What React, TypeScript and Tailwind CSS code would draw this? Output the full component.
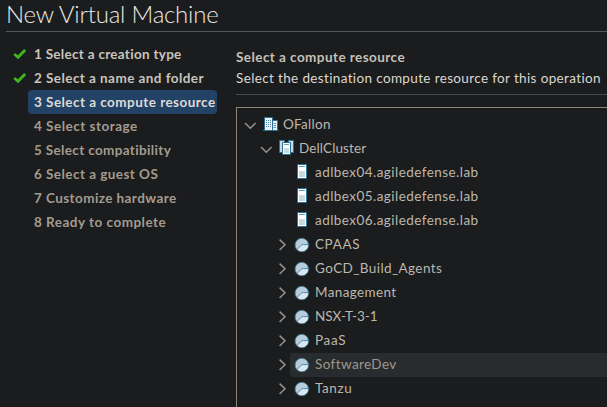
import React from "react";

type Step = { label: string; state: "done" | "current" | "todo"; tracking: string };

const steps: Step[] = [
  { label: "1 Select a creation type", state: "done", tracking: "tracking-[0.29px]" },
  { label: "2 Select a name and folder", state: "done", tracking: "tracking-[0.44px]" },
  { label: "3 Select a compute resource", state: "current", tracking: "tracking-[0.46px]" },
  { label: "4 Select storage", state: "todo", tracking: "tracking-[0.5px]" },
  { label: "5 Select compatibility", state: "todo", tracking: "tracking-[0.35px]" },
  { label: "6 Select a guest OS", state: "todo", tracking: "tracking-[0.45px]" },
  { label: "7 Customize hardware", state: "todo", tracking: "tracking-[0.42px]" },
  { label: "8 Ready to complete", state: "todo", tracking: "tracking-[0.49px]" },
];

const stepColor = {
  done: "text-[#c9c4bd]",
  current: "rounded-[4px] bg-[#224266] text-[#dedbd6]",
  todo: "text-[#a39b8f]",
};

type Kind = "datacenter" | "cluster" | "host" | "pool";
type Node = { label: string; kind: Kind; hovered?: boolean; tracking: string };

const nodes: Node[] = [
  { label: "OFallon", kind: "datacenter", tracking: "tracking-[0.3px]" },
  { label: "DellCluster", kind: "cluster", tracking: "tracking-[0.12px]" },
  { label: "adlbex04.agiledefense.lab", kind: "host", tracking: "tracking-[0.45px]" },
  { label: "adlbex05.agiledefense.lab", kind: "host", tracking: "tracking-[0.45px]" },
  { label: "adlbex06.agiledefense.lab", kind: "host", tracking: "tracking-[0.45px]" },
  { label: "CPAAS", kind: "pool", tracking: "tracking-[0.6px]" },
  { label: "GoCD_Build_Agents", kind: "pool", tracking: "tracking-[0.4px]" },
  { label: "Management", kind: "pool", tracking: "tracking-[0.37px]" },
  { label: "NSX-T-3-1", kind: "pool", tracking: "tracking-[-0.05px]" },
  { label: "PaaS", kind: "pool", tracking: "tracking-[0.7px]" },
  { label: "SoftwareDev", kind: "pool", hovered: true, tracking: "tracking-[0.4px]" },
  { label: "Tanzu", kind: "pool", tracking: "tracking-[0.6px]" },
];

const indent: Record<Kind, string> = {
  datacenter: "pl-[5px]",
  cluster: "pl-[21px]",
  host: "pl-[37px]",
  pool: "pl-[37px]",
};

function Check() {
  return (
    <svg className="h-3 w-3.5" viewBox="0 0 14 12">
      <path d="M1.3 6 L5 9.3 L12.2 1.9" fill="none" stroke="#3fb81f" strokeWidth="2.8" />
    </svg>
  );
}

function Caret({ kind }: { kind: Kind }) {
  return (
    <svg className="h-4 w-4" viewBox="0 0 16 16" fill="none" stroke="#96928e" strokeWidth="1.5">
      {kind === "pool" && <path d="M5.6 2.6 L11 7.8 L5.6 13" />}
      {(kind === "datacenter" || kind === "cluster") && <path d="M3 6 L8.3 11.2 L13.6 6" />}
    </svg>
  );
}

function KindIcon({ kind }: { kind: Kind }) {
  return (
    <svg className="h-4 w-4 overflow-visible" viewBox="0 0 16 16">
      {kind === "datacenter" && (
        <>
          <path d="M1.5 .5H9.5V3.5H14.5V13.5H1.5Z" fill="#e9f1f5" />
          <path d="M1.5 13V.5H9.5V13M10 3.5H14.5V13" fill="none" stroke="#2b6f94" />
          <path d="M0 13.5H15.5" stroke="#2b6f94" />
          <path d="M3 3.5H9M3 5.5H9M3 7.5H9M3 9.5H9" stroke="#4d87a8" strokeDasharray="1 1" />
          <path d="M10.5 6.5H13M10.5 8.5H13M10.5 10.5H13" stroke="#5d92ae" />
        </>
      )}
      {kind === "cluster" && (
        <>
          <path d="M.5 -.5H5.5V11.5H.5ZM9.5 -.5H14.5V11.5H9.5Z" fill="#c5dbe5" stroke="#2b6f94" />
          <path d="M3.5 1.5H11.5V13.5H3.5Z" fill="#fff" stroke="#2b6f94" />
          <path d="M5 3.5H10" stroke="#6d9db6" />
          <path d="M5 7H10V12H5Z" fill="#c7dae2" />
        </>
      )}
      {kind === "host" && (
        <>
          <path d="M2.5 -.5H11.5V13.5H2.5Z" fill="#fff" stroke="#2b7297" />
          <path d="M4 1.5H10" stroke="#6b9ab5" />
          <path d="M4 6H10V12H4Z" fill="#c9d9e0" />
        </>
      )}
      {kind === "pool" && (
        <>
          <circle cx="6.8" cy="8" r="6.6" fill="#b4cddc" />
          <path d="M6.8 7.7H13.3A6.5 6.5 0 0 1 2.3 12.6Z" fill="#dce8f0" />
          <path d="M13.3 7.6H7.1L2.3 12" fill="none" stroke="#4582a3" strokeWidth=".9" />
          <circle cx="6.8" cy="8" r="6.7" fill="none" stroke="#4f8aa8" strokeWidth=".8" />
        </>
      )}
    </svg>
  );
}

export default function App() {
  return (
    <div className="flex h-[407px] w-[607px] flex-col overflow-hidden bg-[#1b1c1d] pl-1.5 font-['Lato',sans-serif] text-[13.5px]">
      <h1 className="h-8 shrink-0 border-b border-[#565656] font-['Lato_Light','Lato',sans-serif] text-[24px] leading-[28px] font-light tracking-[-0.22px] whitespace-nowrap text-[#eae8e5]">
        New Virtual Machine
      </h1>
      <div className="flex min-h-0 flex-1">
        <ol className="w-[230px] shrink-0 pt-2.5 font-bold">
          {steps.map((s) => (
            <li key={s.label} className="flex h-6 items-center">
              <span className="flex w-[22px] shrink-0 pl-[7px]">{s.state === "done" && <Check />}</span>
              <span className={`h-6 w-[189px] pl-1.5 leading-6 whitespace-nowrap ${stepColor[s.state]} ${s.tracking}`}>
                {s.label}
              </span>
            </li>
          ))}
        </ol>
        <section className="flex min-w-0 flex-1 flex-col">
          <header className="h-[63px] shrink-0 border-b border-[#4a4a4a] pt-[15px] whitespace-nowrap">
            <h2 className="leading-[21px] font-bold tracking-[0.44px] text-[#c5c0b9]">Select a compute resource</h2>
            <p className="leading-[21px] tracking-[0.36px] text-[#dcd8d2]">
              Select the destination compute resource for this operation
            </p>
          </header>
          <ul className="mt-3 flex-1 border-t border-l border-[#8d8478] pt-[5px] text-[#bdb7ae]">
            {nodes.map((n) => (
              <li key={n.label} className={`flex h-6 items-center ${indent[n.kind]}`}>
                <Caret kind={n.kind} />
                <span
                  className={`flex h-6 flex-1 items-center gap-1 pl-[5px] whitespace-nowrap ${
                    n.hovered ? "rounded-l-[3px] bg-[#292c2e] text-[#a0978b]" : ""
                  }`}
                >
                  <KindIcon kind={n.kind} />
                  <span className={`pb-0.5 leading-[22px] ${n.tracking}`}>{n.label}</span>
                </span>
              </li>
            ))}
          </ul>
        </section>
      </div>
    </div>
  );
}
